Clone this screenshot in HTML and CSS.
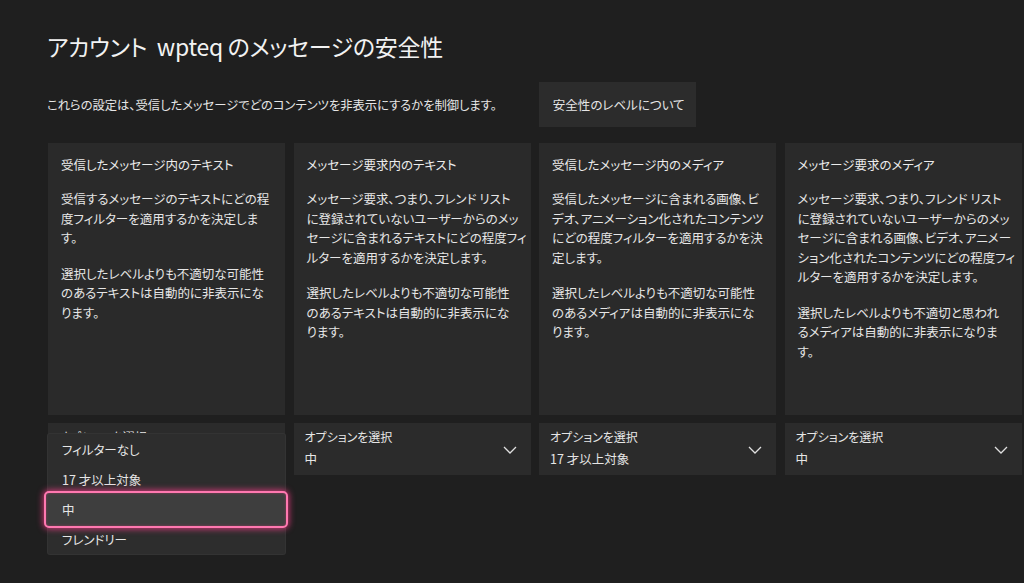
FILE: index.html
```html
<!DOCTYPE html>
<html lang="ja">
<head>
<meta charset="utf-8">
<title>メッセージの安全性</title>
<link rel="stylesheet" href="styles.css">
</head>
<body>
<div class="page">
  <h1 class="title">アカウント&nbsp; wpteq のメッセージの安全性</h1>
  <div class="intro">
    <p class="intro-text">これらの設定は、受信したメッセージでどのコンテンツを非表示にするかを制御します。</p>
    <div class="btn">安全性のレベルについて</div>
  </div>

  <div class="cards">
    <div class="card">
      <div class="card-title">受信したメッセージ内のテキスト</div>
      <p class="card-body">受信するメッセージのテキストにどの程<br>度フィルターを適用するかを決定しま<br>す。</p>
      <p class="card-body">選択したレベルよりも不適切な可能性<br>のあるテキストは自動的に非表示にな<br>ります。</p>
    </div>
    <div class="card">
      <div class="card-title">メッセージ要求内のテキスト</div>
      <p class="card-body">メッセージ要求、つまり、フレンド リスト<br>に登録されていないユーザーからのメッ<br>セージに含まれるテキストにどの程度フィ<br>ルターを適用するかを決定します。</p>
      <p class="card-body">選択したレベルよりも不適切な可能性<br>のあるテキストは自動的に非表示にな<br>ります。</p>
    </div>
    <div class="card">
      <div class="card-title">受信したメッセージ内のメディア</div>
      <p class="card-body">受信したメッセージに含まれる画像、ビ<br>デオ、アニメーション化されたコンテンツ<br>にどの程度フィルターを適用するかを決<br>定します。</p>
      <p class="card-body">選択したレベルよりも不適切な可能性<br>のあるメディアは自動的に非表示にな<br>ります。</p>
    </div>
    <div class="card">
      <div class="card-title">メッセージ要求のメディア</div>
      <p class="card-body">メッセージ要求、つまり、フレンド リスト<br>に登録されていないユーザーからのメッ<br>セージに含まれる画像、ビデオ、アニメー<br>ション化されたコンテンツにどの程度フィ<br>ルターを適用するかを決定します。</p>
      <p class="card-body">選択したレベルよりも不適切と思われ<br>るメディアは自動的に非表示になりま<br>す。</p>
    </div>
  </div>

  <div class="selects">
    <div class="select-wrap">
      <div class="select">
        <div class="select-text">
          <div class="select-label">オプションを選択</div>
        </div>
        <svg class="chev" width="14" height="8" viewBox="0 0 14 8"><polyline points="1,1 7,7 13,1" fill="none" stroke="#e0e0e0" stroke-width="1.3"/></svg>
      </div>
      <ul class="menu">
        <li class="menu-item"><span>フィルターなし</span></li>
        <li class="menu-item"><span>17 才以上対象</span></li>
        <li class="menu-item is-focused"><span>中</span></li>
        <li class="menu-item"><span>フレンドリー</span></li>
      </ul>
    </div>
    <div class="select-wrap">
      <div class="select">
        <div class="select-text">
          <div class="select-label">オプションを選択</div>
          <div class="select-value">中</div>
        </div>
        <svg class="chev" width="14" height="8" viewBox="0 0 14 8"><polyline points="1,1 7,7 13,1" fill="none" stroke="#e0e0e0" stroke-width="1.3"/></svg>
      </div>
    </div>
    <div class="select-wrap">
      <div class="select">
        <div class="select-text">
          <div class="select-label">オプションを選択</div>
          <div class="select-value">17 才以上対象</div>
        </div>
        <svg class="chev" width="14" height="8" viewBox="0 0 14 8"><polyline points="1,1 7,7 13,1" fill="none" stroke="#e0e0e0" stroke-width="1.3"/></svg>
      </div>
    </div>
    <div class="select-wrap">
      <div class="select">
        <div class="select-text">
          <div class="select-label">オプションを選択</div>
          <div class="select-value">中</div>
        </div>
        <svg class="chev" width="14" height="8" viewBox="0 0 14 8"><polyline points="1,1 7,7 13,1" fill="none" stroke="#e0e0e0" stroke-width="1.3"/></svg>
      </div>
    </div>
  </div>
</div>
</body>
</html>
```

FILE: styles.css
```css
html, body {
  margin: 0;
  padding: 0;
  background: #1f1f1f;
  height: 100%;
}
body {
  font-family: "Noto Sans CJK JP", "Noto Sans", sans-serif;
  font-feature-settings: "palt";
  color: #e8e8e8;
  overflow: hidden;
}
.page {
  padding: 28px 4px 0 47px;
}
.title {
  margin: 0;
  font-size: 23px;
  line-height: 36px;
  font-weight: 400;
  color: #f2f2f2;
  letter-spacing: -0.3px;
}
.intro {
  display: flex;
  align-items: center;
  margin-top: 18px;
  height: 45px;
}
.intro-text {
  margin: 0;
  font-size: 12.3px;
  line-height: 18px;
  color: #e6e6e6;
}
.btn {
  margin-left: 42px;
  width: 157px;
  height: 45px;
  box-sizing: border-box;
  padding-left: 14px;
  display: flex;
  align-items: center;
  background: #2c2c2c;
  font-size: 12.5px;
  color: #e6e6e6;
}
.cards {
  display: grid;
  grid-template-columns: repeat(4, 237px);
  column-gap: 8.5px;
  margin-top: 16px;
  margin-left: 1px;
}
.card {
  height: 272px;
  box-sizing: border-box;
  background: #2a2a2a;
  padding: 12px 10px 0 13px;
}
.card-title {
  font-size: 12.5px;
  line-height: 20px;
  color: #ececec;
  white-space: nowrap;
}
.card-body {
  margin: 14px 0 0;
  font-size: 12.5px;
  line-height: 19.5px;
  color: #e6e6e6;
  white-space: nowrap;
}
.card-body + .card-body {
  margin-top: 16px;
}
.selects {
  display: grid;
  grid-template-columns: repeat(4, 237px);
  column-gap: 8.5px;
  margin-top: 8px;
  margin-left: 1px;
}
.select-wrap {
  position: relative;
}
.select {
  height: 52px;
  box-sizing: border-box;
  background: #2b2b2b;
  padding: 5px 14px 0 11px;
  display: flex;
  justify-content: space-between;
}
.select-label {
  font-size: 12px;
  line-height: 18px;
  color: #e6e6e6;
}
.select-value {
  margin-top: 4px;
  font-size: 12.5px;
  line-height: 18px;
  color: #e6e6e6;
}
.chev {
  margin-top: 18px;
}
.menu {
  position: absolute;
  top: 11px;
  left: 0;
  width: 237px;
  margin: 0;
  padding: 0;
  list-style: none;
  background: #2d2d2d;
  border-radius: 2px;
  box-shadow: 0 0 0 1px #333;
}
.menu-item {
  position: relative;
  height: 30px;
  padding-left: 14px;
  display: flex;
  align-items: center;
  font-size: 12.5px;
  color: #e6e6e6;
}
.menu-item span {
  position: relative;
}
.menu-item.is-focused::before {
  content: "";
  position: absolute;
  top: -3px;
  bottom: -4px;
  left: -4px;
  right: -3px;
  background: #3e3e3e;
  border: 2px solid #ff78b0;
  border-radius: 5px;
  box-shadow: 0 0 6px 1px rgba(255, 60, 140, 0.75), inset 0 0 3px rgba(255, 60, 140, 0.4);
}
```
